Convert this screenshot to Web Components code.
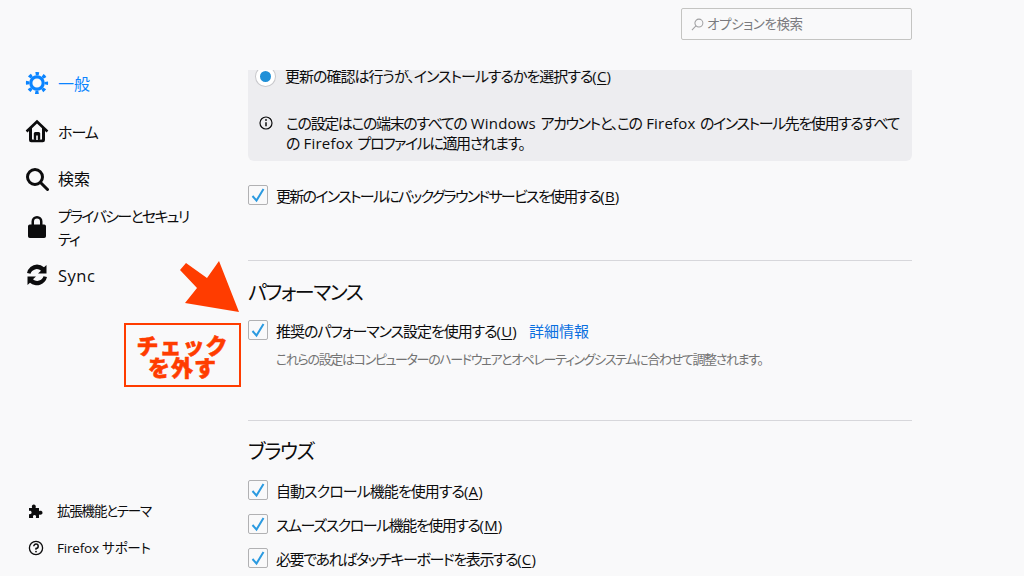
<!DOCTYPE html>
<html lang="ja">
<head>
<meta charset="utf-8">
<title>オプション</title>
<style>
html, body { margin: 0; height: 576px; overflow: hidden; background: #f9f9fa; }
body { font: 15px "Open Sans", "Noto Sans CJK JP", sans-serif; color: #0c0c0d; font-feature-settings: "palt"; }
u { text-underline-offset: 2px; }
.l { letter-spacing: .2px; }
</style>
</head>
<body>

<pref-page>
  <pref-nav slot="nav">
    <nav-item active label="一般" style="font-size:16px">
      <svg slot="icon" viewBox="0 0 24 24" width="24" height="24" fill="none" stroke="#0a84ff"><circle cx="12" cy="12" r="6.2" stroke-width="3.2"/><circle cx="12" cy="12" r="9.4" stroke-width="3.4" stroke-dasharray="3.4 3.98" stroke-dashoffset="1.7"/></svg>
    </nav-item>
    <nav-item label="ホーム" style="letter-spacing:-1px">
      <svg slot="icon" viewBox="0 0 24 24" width="24" height="24" fill="#0c0c0d"><path fill-rule="evenodd" d="M12 .8.700 11.600l1.700 1.800 1.600-1.500V21a2.200 2.200 0 0 0 2.200 2.200h11.600A2.200 2.200 0 0 0 20 21v-9.100l1.600 1.500 1.700-1.800zm5 19.800H7V9.200l5-4.800 5 4.800z"/><rect x="8.800" y="13" width="6.400" height="8" rx="1.500"/><rect x="11.200" y="16.500" width="1.600" height="4.500" fill="#f9f9fa"/></svg>
    </nav-item>
    <nav-item label="検索" style="font-size:16px;--lift:0">
      <svg slot="icon" viewBox="0 0 24 24" width="24" height="24" fill="none" stroke="#0c0c0d" stroke-width="3"><circle cx="10" cy="10" r="7.500"/><path d="m15.500 15.500 7 7" stroke-linecap="round"/></svg>
    </nav-item>
    <nav-item label="プライバシーとセキュリティ" style="letter-spacing:-1.7px">
      <svg slot="icon" viewBox="0 0 24 24" width="24" height="24" fill="#0c0c0d"><path d="M4.800 9.500h1.700V6.500a5.500 5.500 0 0 1 11 0v3h1.700A1.800 1.800 0 0 1 21 11.300v9.900a1.800 1.800 0 0 1-1.800 1.800H4.800A1.800 1.800 0 0 1 3 21.200v-9.900a1.800 1.800 0 0 1 1.800-1.800zm4.200 0h6v-3a3 3 0 0 0-6 0z"/></svg>
    </nav-item>
    <nav-item label="Sync" style="font-size:16.500px;letter-spacing:.5px;--lift:0">
      <svg slot="icon" viewBox="0 0 24 24" width="24" height="24" fill="#0c0c0d"><path d="M12 1.500a10.500 10.500 0 0 1 7 2.700L21.500 2v8.500h-8.500l3-2.800A6.500 6.500 0 0 0 5.500 10.800L2 10A10.500 10.500 0 0 1 12 1.500zM2.500 13.500H11l-3 2.800a6.500 6.500 0 0 0 10.500-3.100l3.500.8A10.500 10.500 0 0 1 5 19.800L2.500 22z"/></svg>
    </nav-item>
    <nav-item small label="拡張機能とテーマ" slot="footer" style="letter-spacing:-1.200px">
      <svg slot="icon" viewBox="0 0 16 16" width="16" height="16" fill="#0c0c0d"><path d="M1 5h3.200C3.500 3.800 3.800 1.500 5.800 1.500S8.200 3.800 7.500 5H11v3.200c1.200-.7 3.500-.4 3.500 1.600s-2.300 2.300-3.500 1.600V15H7.800c.6-1.200.3-2.900-1.300-2.900S4.700 13.800 5.300 15H1v-4c1 .5 2.600 0 2.600-1.500S2 7.500 1 8z"/></svg>
    </nav-item>
    <nav-item small label="Firefox サポート" slot="footer" style="letter-spacing:-.2px">
      <svg slot="icon" viewBox="0 0 16 16" width="16" height="16" fill="none" stroke="#0c0c0d" stroke-width="1.300"><circle cx="8" cy="8" r="6.600"/><path d="M5.800 6.300A2.200 2.200 0 1 1 8 8.500v1.200" stroke-width="1.500"/><circle cx="8" cy="11.600" r=".9" fill="#0c0c0d" stroke="none"/></svg>
    </nav-item>
  </pref-nav>

  <pref-search slot="search" placeholder="オプションを検索"></pref-search>

  <update-box>
    <span slot="radio" style="letter-spacing:-1px">更新の確認は行うが、インストールするかを選択する<span class="l">(<u>C</u>)</span></span>
    この設定はこの端末のすべての <span class="l">Windows</span> アカウントと、この <span class="l">Firefox</span> のインストール先を使用するすべての <span class="l">Firefox</span> プロファイルに適用されます。
  </update-box>
  <pref-check style="margin-top:24px;letter-spacing:-1.7px">更新のインストールにバックグラウンドサービスを使用する<span class="l">(<u>B</u>)</span></pref-check>

  <pref-section heading="パフォーマンス" style="margin-top:55px;height:159px">
    <pref-check style="letter-spacing:-1.050px">推奨のパフォーマンス設定を使用する<span class="l">(<u>U</u>)</span><a slot="extra" href="#">詳細情報</a></pref-check>
    <pref-hint>これらの設定はコンピューターのハードウェアとオペレーティングシステムに合わせて調整されます。</pref-hint>
  </pref-section>

  <pref-section heading="ブラウズ" style="--head-top:17px;--head-bottom:14px">
    <pref-check style="letter-spacing:-.95px">自動スクロール機能を使用する<span class="l">(<u>A</u>)</span></pref-check>
    <pref-check style="margin-top:14px;letter-spacing:-1.450px">スムーズスクロール機能を使用する<span class="l">(<u>M</u>)</span></pref-check>
    <pref-check style="margin-top:14px;letter-spacing:-1.400px">必要であればタッチキーボードを表示する<span class="l">(<u>C</u>)</span></pref-check>
  </pref-section>

  <pref-callout slot="overlay">チェック<br>を外す</pref-callout>
</pref-page>

<script>
function defineEl(name, css, html, extra) {
  const template = document.createElement("template");
  template.innerHTML = "<style>" + css + "</style>" + html;
  class El extends HTMLElement {
    constructor() {
      super();
      this.attachShadow({ mode: "open" });
      this.shadowRoot.appendChild(template.content.cloneNode(true));
    }
    connectedCallback() {
      if (extra) extra(this);
    }
  }
  customElements.define(name, El);
}

defineEl("pref-page", `
  :host { display: grid; grid-template-columns: 248px 664px; grid-template-rows: 70px 506px; height: 576px; position: relative; }
  .nav { grid-row: 1 / 3; display: block; }
  .head { display: flex; justify-content: flex-end; align-items: flex-start; padding-top: 8px; }
  main { overflow: hidden; }
`, `
  <div class="nav"><slot name="nav"></slot></div>
  <div class="head"><slot name="search"></slot></div>
  <main><slot></slot></main>
  <slot name="overlay"></slot>
`);

defineEl("pref-nav", `
  :host { display: flex; flex-direction: column; justify-content: space-between; height: 576px; box-sizing: border-box; padding: 59px 0 10px 25px; }
  .top, .bottom { display: flex; flex-direction: column; }
`, `
  <div class="top"><slot></slot></div>
  <div class="bottom"><slot name="footer"></slot></div>
`);

defineEl("nav-item", `
  :host { display: flex; align-items: center; gap: 9px; min-height: 48px; width: 172px; line-height: 23px; }
  :host([active]) { color: #0a84ff; }
  :host([small]) { min-height: 37px; font-size: 13.500px; line-height: 18px; gap: 13px; padding-left: 3px; --lift: 0; }
  .label { flex: 1; margin-top: var(--lift, 2px); }
  ::slotted(svg) { flex: none; display: block; }
`, `
  <slot name="icon"></slot><span class="label"></span>
`, el => { el.shadowRoot.querySelector(".label").textContent = el.getAttribute("label"); });

defineEl("pref-search", `
  :host { display: flex; align-items: center; gap: 5px; width: 231px; height: 32px; box-sizing: border-box; border: 1px solid #c4c4c2; border-radius: 2px; padding-left: 9px; color: #7a7a7e; font-size: 13.500px; letter-spacing: -.4px; }
  svg { display: block; }
  .ph { margin-top: -2px; margin-left: -2px; }
`, `
  <svg viewBox="0 0 14 14" width="13" height="13" fill="none" stroke="#a0a0a2" stroke-width="1.100"><circle cx="8.500" cy="5.500" r="4.300"/><path d="M5.300 8.500 1 13"/></svg>
  <span class="ph"></span>
`, el => { el.shadowRoot.querySelector(".ph").textContent = el.getAttribute("placeholder"); });

defineEl("update-box", `
  :host { display: block; background: #ededf0; border-radius: 0 0 6px 6px; height: 91px; box-sizing: border-box; padding: 0 12px 8px 8px; overflow: hidden; }
  .radio { display: flex; align-items: center; gap: 10px; height: 20px; margin-top: -4px; }
  .radio span:last-child { margin-bottom: 2px; }
  .dot { width: 19px; height: 19px; box-sizing: border-box; border-radius: 50%; background: #2090d8; border: 4px solid #fff; box-shadow: 0 0 0 1px #c8c8cc; }
  .info { display: flex; gap: 13px; margin-top: 27px; line-height: 20px; letter-spacing: -1.400px; word-spacing: 2px; }
  svg { flex: none; margin: 3px 0 0 3px; }
`, `
  <div class="radio"><span class="dot"></span><span><slot name="radio"></slot></span></div>
  <div class="info">
    <svg viewBox="0 0 14 14" width="14" height="14" fill="none" stroke="#0c0c0d" stroke-width="1.200"><circle cx="7" cy="7" r="6"/><path d="M7 6.200v4" stroke-width="1.500"/><circle cx="7" cy="4" r=".9" fill="#0c0c0d" stroke="none"/></svg>
    <span><slot></slot></span>
  </div>
`);

defineEl("pref-check", `
  :host { display: flex; align-items: center; gap: 8px; height: 20px; white-space: nowrap; }
  .box { flex: none; width: 20px; height: 20px; box-sizing: border-box; border: 1px solid #b1b1b3; border-radius: 2px; background: #f9f9fa; }
  svg { display: block; }
  ::slotted(a) { margin-left: 4px; color: #0a6fe0; text-decoration: none; letter-spacing: 0; }
`, `
  <span class="box"><svg viewBox="0 0 18 18" width="18" height="18" fill="none" stroke="#2b9ae0" stroke-width="2"><path d="M3.500 10 7.500 14.500 14.500 3"/></svg></span>
  <span><slot></slot></span><slot name="extra"></slot>
`);

defineEl("pref-section", `
  :host { display: block; border-top: 1px solid #d7d7db; }
  h2 { margin: var(--head-top, 18px) 0 var(--head-bottom, 13px); font-size: 20px; font-weight: 400; line-height: 28px; letter-spacing: -1.4px; }
`, `
  <h2></h2><slot></slot>
`, el => { el.shadowRoot.querySelector("h2").textContent = el.getAttribute("heading"); });

defineEl("pref-hint", `
  :host { display: block; margin: 9px 0 0 28px; font-size: 13px; line-height: 20px; color: #737373; white-space: nowrap; letter-spacing: -1.350px; }
`, `<slot></slot>`);

defineEl("pref-callout", `
  :host { position: absolute; left: 124px; top: 261px; width: 118px; height: 126px; display: block; }
  svg { position: absolute; left: 55px; top: 0; }
  .box { position: absolute; left: 0; top: 62px; width: 117px; height: 64px; box-sizing: border-box; border: 2px solid #ff3c00; background: #f9f9fa; color: #ff3c00; display: flex; align-items: center; justify-content: center; text-align: center; font-size: 22px; font-weight: 900; line-height: 22px; letter-spacing: 1px; font-feature-settings: normal; -webkit-text-stroke: .5px #ff3c00; padding-top: 2px; }
`, `
  <svg viewBox="0 0 62 52" width="62" height="52"><path d="M1 9 7 2 28 17 40 0 60 51 6 42 18 27z" fill="#ff3c00"/></svg>
  <div class="box"><span><slot></slot></span></div>
`);
</script>
</body>
</html>
